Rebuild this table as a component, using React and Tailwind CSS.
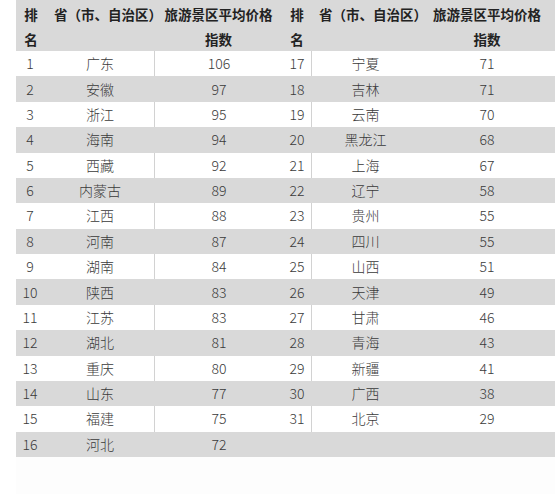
const left = [
  [1, "广东", 106], [2, "安徽", 97], [3, "浙江", 95], [4, "海南", 94], [5, "西藏", 92],
  [6, "内蒙古", 89], [7, "江西", 88], [8, "河南", 87], [9, "湖南", 84], [10, "陕西", 83],
  [11, "江苏", 83], [12, "湖北", 81], [13, "重庆", 80], [14, "山东", 77], [15, "福建", 75],
  [16, "河北", 72],
];
const right = [
  [17, "宁夏", 71], [18, "吉林", 71], [19, "云南", 70], [20, "黑龙江", 68], [21, "上海", 67],
  [22, "辽宁", 58], [23, "贵州", 55], [24, "四川", 55], [25, "山西", 51], [26, "天津", 49],
  [27, "甘肃", 46], [28, "青海", 43], [29, "新疆", 41], [30, "广西", 38], [31, "北京", 29],
];

export default function App() {
  return (
    <div
      className="w-[556px] h-[494px] bg-white pl-[16px]"
      style={{ fontFamily: '"Microsoft YaHei", "Noto Sans CJK SC", "Noto Sans", sans-serif' }}
    >
      <div className="w-[539px] bg-[#fdfdfd] h-[494px]">
        {/* header */}
        <div className="flex h-[51px] bg-[#d9d9d9] text-[13.5px] font-bold text-[#222] leading-[25px] pt-[2px]">
          <div className="w-[28px] text-center pl-[2px]">排<br />名</div>
          <div className="w-[110px] text-center pl-[10px] whitespace-nowrap">省（市、自治区）</div>
          <div className="w-[129px] text-center">旅游景区平均价格<br />指数</div>
          <div className="w-[28px] text-center">排<br />名</div>
          <div className="w-[108px] text-center pl-[8px] whitespace-nowrap">省（市、自治区）</div>
          <div className="w-[136px] text-center">旅游景区平均价格<br />指数</div>
        </div>
        {left.map((l, i) => {
          const r = right[i];
          const gray = i % 2 === 1;
          return (
            <div
              key={i}
              className={
                "flex h-[25.375px] items-center text-[14px] font-light text-[#3a3a3a] " +
                (gray ? "bg-[#d9d9d9]" : "bg-white")
              }
            >
              <div className="w-[28px] text-center">{l[0]}</div>
              <div className="w-[110px] text-center pl-[2px]">{l[1]}</div>
              <div
                className={
                  "w-[129px] h-full flex items-center justify-center border-l " +
                  (gray ? "border-transparent" : "border-[#d2d2d2]")
                }
              >
                {l[2]}
              </div>
              <div className="w-[28px] text-center">{r ? r[0] : ""}</div>
              <div
                className={
                  "w-[108px] h-full flex items-center justify-center border-l " +
                  (gray || !r ? "border-transparent" : "border-[#d2d2d2]")
                }
              >
                {r ? r[1] : ""}
              </div>
              <div className="w-[136px] text-center">{r ? r[2] : ""}</div>
            </div>
          );
        })}
      </div>
    </div>
  );
}
